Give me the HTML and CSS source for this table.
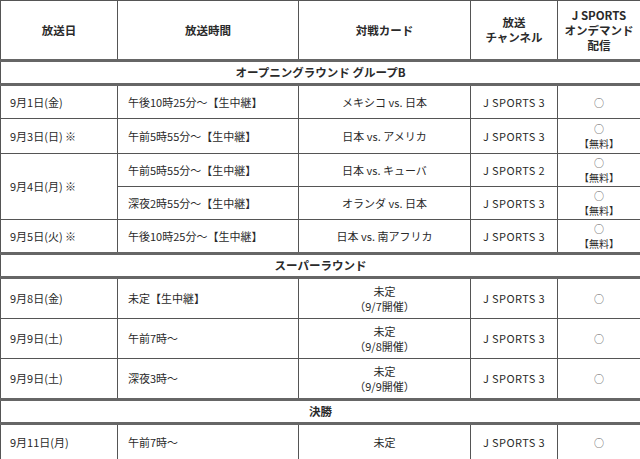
FILE: index.html
```html
<!DOCTYPE html>
<html lang="ja">
<head>
<meta charset="utf-8">
<link rel="stylesheet" href="styles.css">
</head>
<body>
<table class="sched">
  <colgroup>
    <col class="c-date"><col class="c-time"><col class="c-card"><col class="c-ch"><col class="c-od">
  </colgroup>
  <thead>
    <tr class="head">
      <th>放送日</th>
      <th>放送時間</th>
      <th>対戦カード</th>
      <th>放送<br>チャンネル</th>
      <th>J SPORTS<br>オンデマンド<br>配信</th>
    </tr>
  </thead>
  <tbody>
    <tr class="section"><td colspan="5">オープニングラウンド グループB</td></tr>
    <tr class="r34">
      <td class="date">9月1日(金)</td>
      <td class="time">午後10時25分～【生中継】</td>
      <td class="ctr">メキシコ vs. 日本</td>
      <td class="ch">J SPORTS 3</td>
      <td class="od"><span class="mark">○</span></td>
    </tr>
    <tr class="r35">
      <td class="date">9月3日(日) ※</td>
      <td class="time">午前5時55分～【生中継】</td>
      <td class="ctr">日本 vs. アメリカ</td>
      <td class="ch">J SPORTS 3</td>
      <td class="od"><span class="mark">○</span><span class="free">【無料】</span></td>
    </tr>
    <tr class="r33">
      <td class="date" rowspan="2">9月4日(月) ※</td>
      <td class="time">午前5時55分～【生中継】</td>
      <td class="ctr">日本 vs. キューバ</td>
      <td class="ch">J SPORTS 2</td>
      <td class="od"><span class="mark">○</span><span class="free">【無料】</span></td>
    </tr>
    <tr class="r33">
      <td class="time">深夜2時55分～【生中継】</td>
      <td class="ctr">オランダ vs. 日本</td>
      <td class="ch">J SPORTS 3</td>
      <td class="od"><span class="mark">○</span><span class="free">【無料】</span></td>
    </tr>
    <tr class="r33">
      <td class="date">9月5日(火) ※</td>
      <td class="time">午後10時25分～【生中継】</td>
      <td class="ctr">日本 vs. 南アフリカ</td>
      <td class="ch">J SPORTS 3</td>
      <td class="od"><span class="mark">○</span><span class="free">【無料】</span></td>
    </tr>
    <tr class="section"><td colspan="5">スーパーラウンド</td></tr>
    <tr class="r40">
      <td class="date">9月8日(金)</td>
      <td class="time">未定【生中継】</td>
      <td class="ctr">未定<br>（9/7開催）</td>
      <td class="ch">J SPORTS 3</td>
      <td class="od"><span class="mark">○</span></td>
    </tr>
    <tr class="r40">
      <td class="date">9月9日(土)</td>
      <td class="time">午前7時～</td>
      <td class="ctr">未定<br>（9/8開催）</td>
      <td class="ch">J SPORTS 3</td>
      <td class="od"><span class="mark">○</span></td>
    </tr>
    <tr class="r40">
      <td class="date">9月9日(土)</td>
      <td class="time">深夜3時～</td>
      <td class="ctr">未定<br>（9/9開催）</td>
      <td class="ch">J SPORTS 3</td>
      <td class="od"><span class="mark">○</span></td>
    </tr>
    <tr class="section"><td colspan="5">決勝</td></tr>
    <tr class="r36">
      <td class="date">9月11日(月)</td>
      <td class="time">午前7時～</td>
      <td class="ctr">未定</td>
      <td class="ch">J SPORTS 3</td>
      <td class="od"><span class="mark">○</span></td>
    </tr>
  </tbody>
</table>
</body>
</html>
```

FILE: styles.css
```css
html, body {
  margin: 0;
  padding: 0;
  background: #fff;
}
body {
  font-family: "Noto Sans CJK JP", "Noto Sans", sans-serif;
  font-size: 11px;
  color: #2a2a2a;
}
.sched {
  border-collapse: collapse;
  table-layout: fixed;
  width: 640px;
  border: 1px solid #111;
}
.c-date { width: 117px; }
.c-time { width: 181px; }
.c-card { width: 172px; }
.c-ch { width: 87px; }
.c-od { width: 83px; }
.sched th, .sched td {
  border: 1px solid #555;
  padding: 0;
  line-height: 15px;
  vertical-align: middle;
}
.sched th {
  font-weight: bold;
  text-align: center;
  font-size: 11.5px;
  height: 58px;
}
.head th { border-bottom: 3px solid #666; }
.section td {
  height: 21px;
  text-align: center;
  font-weight: bold;
  font-size: 11.5px;
  border-top: 3px solid #666;
  border-bottom: 3px solid #666;
}
.r34 td { height: 32px; }
.r35 td { height: 34px; }
.r33 td { height: 32px; }
.r40 td { height: 39px; }
.r36 td { height: 35px; }
.date { padding-left: 9px !important; text-align: left; }
.time { padding-left: 10px !important; text-align: left; }
.ctr { text-align: center; }
.ch { text-align: center; letter-spacing: 0.4px; }
.od { text-align: center; }
.mark { display: block; font-size: 10px; line-height: 15px; color: #555; }
.free { display: block; font-size: 10px; line-height: 15px; }
```
